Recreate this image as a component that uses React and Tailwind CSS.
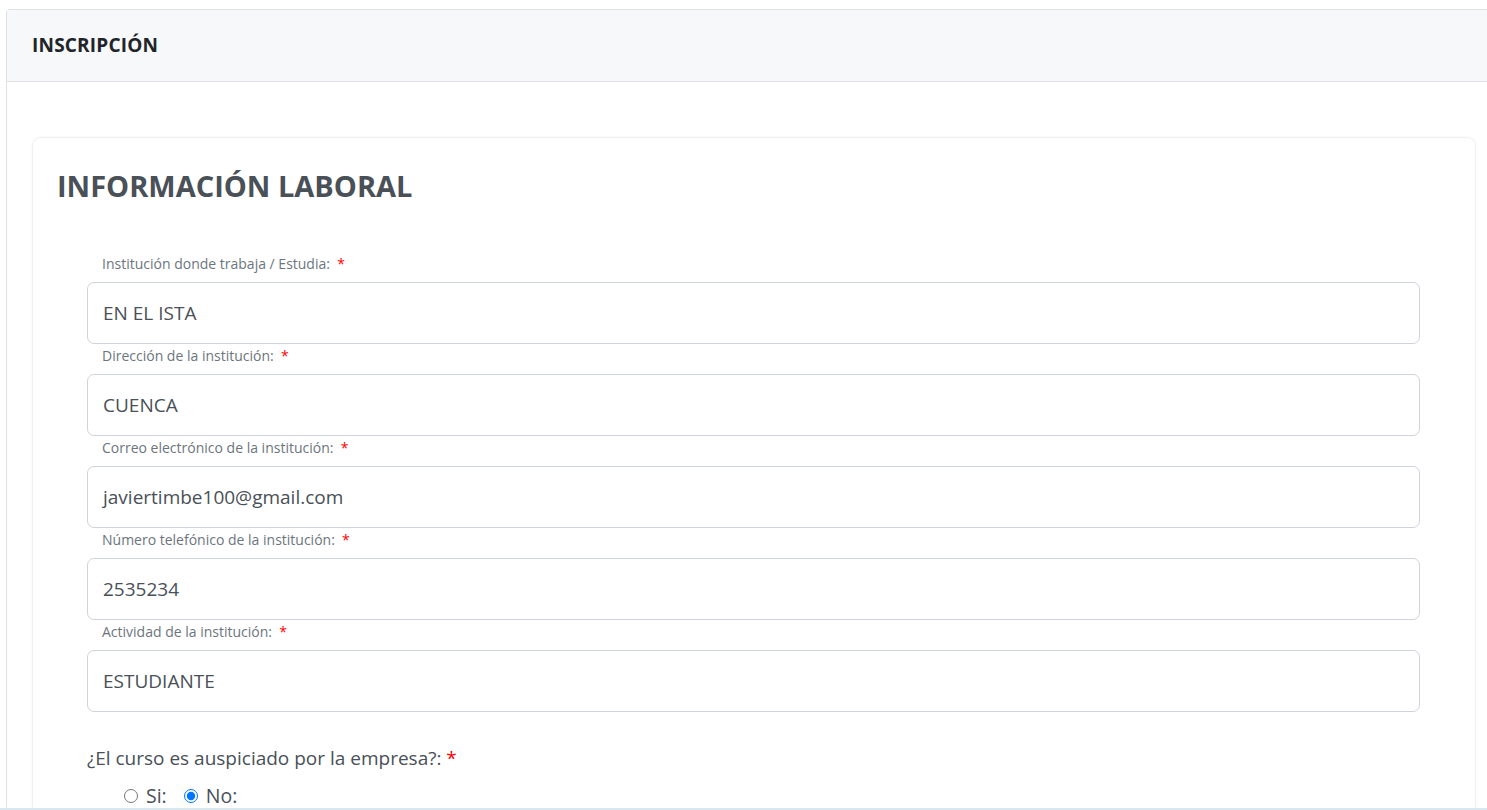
import React from "react";

const fields = [
  { label: "Institución donde trabaja / Estudia:", value: "EN EL ISTA", gap: "  " },
  { label: "Dirección de la institución:", value: "CUENCA", gap: "  " },
  { label: "Correo electrónico de la institución:", value: "javiertimbe100@gmail.com", gap: "  " },
  { label: "Número telefónico de la institución:", value: "2535234", gap: "  " },
  { label: "Actividad de la institución:", value: "ESTUDIANTE", gap: "  " },
];

export default function App() {
  return (
    <div
      className="w-[1487px] h-[810px] overflow-hidden bg-white relative"
      style={{ fontFamily: '"Open Sans", "Noto Sans", sans-serif' }}
    >
      <div className="ml-[6px] mt-[9px] border-l border-t border-[#dfe1e5] rounded-tl-[4px] h-[820px]">
        <div className="h-[72px] bg-[#f7f8fa] border-b border-[#dfe1e5] flex items-center pl-[25px]">
          <h1 className="text-[19px] font-bold text-[#212529] tracking-[0.2px]">INSCRIPCIÓN</h1>
        </div>
        <div className="pt-[55px] pl-[25px] pr-[11px]">
          <div className="border border-[#f0f1f3] rounded-[9px] shadow-[0_0_3px_rgba(0,0,0,0.05)] pt-[30px] px-[24px] h-[700px]">
            <h2 className="text-[29px] leading-[36px] font-bold text-[#495057]">
              INFORMACIÓN LABORAL
            </h2>
            <div className="pl-[30px] pr-[31px] mt-[50px]">
              {fields.map((f, i) => (
                <div key={i}>
                  <label
                    className={`block text-[14px] leading-[20px] text-[#6c757d] pl-[15px] mb-[8px] whitespace-pre ${i === 0 ? "" : "mt-[2px]"}`}
                  >
                    {f.label}
                    {f.gap}
                    <span className="text-[#ff0000]">*</span>
                  </label>
                  <div className="h-[62px] border border-[#ced4da] rounded-[7px] flex items-center pl-[15px] text-[19px] text-[#495057]">
                    {f.value}
                  </div>
                </div>
              ))}
              <div className="mt-[33px] text-[19px] leading-[27px] text-[#495057]">
                ¿El curso es auspiciado por la empresa?: <span className="text-[#ff0000]">*</span>
              </div>
              <div className="mt-[11px] pl-[37px] flex items-center text-[19.5px] leading-[26px] text-[#495057]">
                <input type="radio" name="ausp" className="w-[14px] h-[14px] m-0 mr-[8px]" />
                <span>Si:</span>
                <input type="radio" name="ausp" defaultChecked className="w-[14px] h-[14px] m-0 ml-[17px] mr-[8px]" />
                <span>No:</span>
              </div>
            </div>
          </div>
        </div>
      </div>
      <div className="absolute left-0 right-0 bottom-0 h-[2px] bg-[#d9e8ee]"></div>
    </div>
  );
}
